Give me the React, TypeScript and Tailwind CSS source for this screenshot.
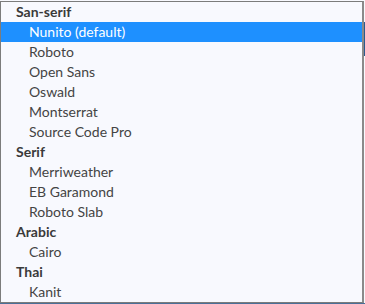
import React from "react";

type Row = { label: string; group?: boolean; selected?: boolean };

const rows: Row[] = [
  { label: "San-serif", group: true },
  { label: "Nunito (default)", selected: true },
  { label: "Roboto" },
  { label: "Open Sans" },
  { label: "Oswald" },
  { label: "Montserrat" },
  { label: "Source Code Pro" },
  { label: "Serif", group: true },
  { label: "Merriweather" },
  { label: "EB Garamond" },
  { label: "Roboto Slab" },
  { label: "Arabic", group: true },
  { label: "Cairo" },
  { label: "Thai", group: true },
  { label: "Kanit" },
];

export default function App() {
  return (
    <div
      className="relative w-[365px] h-[304px] bg-[#f8f9fe] overflow-hidden"
      style={{ fontFamily: "Lato, 'Open Sans', sans-serif" }}
    >
      <div className="absolute right-0 top-[22px] w-px h-[34px] bg-[#2b5a8e]" />
      <div className="absolute left-0 bottom-0 w-full h-px bg-[#4a6f98]" />
      <div className="mt-px w-[364px] h-[302px] border border-[#7c7c7c] border-r-2 border-r-[#8a8a8a] bg-[#f8f9fe] flex flex-col">
        {rows.map((r) => (
          <div
            key={r.label}
            className={
              "h-[20px] flex items-center text-[14px] leading-none " +
              (r.group
                ? "pl-[15px] font-bold text-[#3a3a3a]"
                : r.selected
                ? "pl-[28px] bg-[#1e90ff] text-white"
                : "pl-[28px] text-[#444444]")
            }
          >
            {r.label}
          </div>
        ))}
      </div>
    </div>
  );
}
